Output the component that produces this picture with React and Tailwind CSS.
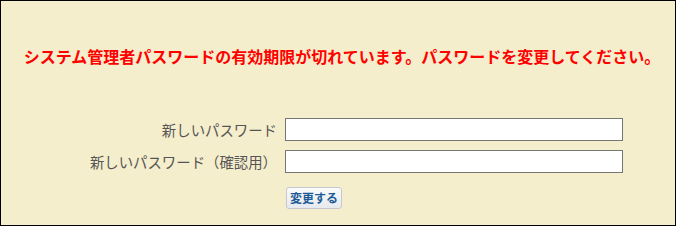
export default function App() {
  return (
    <div
      className="w-[676px] h-[226px] border border-black bg-[#f5eecc] box-border"
      style={{ fontFamily: '"Noto Sans CJK JP", "Liberation Sans", sans-serif' }}
    >
      {/* Warning */}
      <h1 className="pt-[43px] pl-[8px] text-center text-[16px] leading-[24px] font-bold text-[#ff0000]">
        システム管理者パスワードの有効期限が切れています。パスワードを変更してください。
      </h1>

      {/* Form */}
      <form className="mt-[50px] grid grid-cols-[276px_338px] gap-x-[8px] gap-y-[9px] items-center">
        <label className="text-right text-[14.4px] leading-[23px] text-[#555555]">新しいパスワード</label>
        <input type="password" className="h-[23px] bg-white border border-[#767676]" />

        <label className="text-right text-[14.4px] leading-[23px] text-[#555555]">新しいパスワード（確認用）</label>
        <input type="password" className="h-[23px] bg-white border border-[#767676]" />

        <div />
        <div className="pt-[2px]">
          <button
            type="button"
            className="ml-[1px] h-[22px] w-[56px] rounded-[3px] border border-[#c5c9cf] bg-gradient-to-b from-[#fbfbfc] to-[#e6e9ee] text-[12px] leading-[18px] font-bold text-[#1d5b96]"
          >
            変更する
          </button>
        </div>
      </form>
    </div>
  );
}
